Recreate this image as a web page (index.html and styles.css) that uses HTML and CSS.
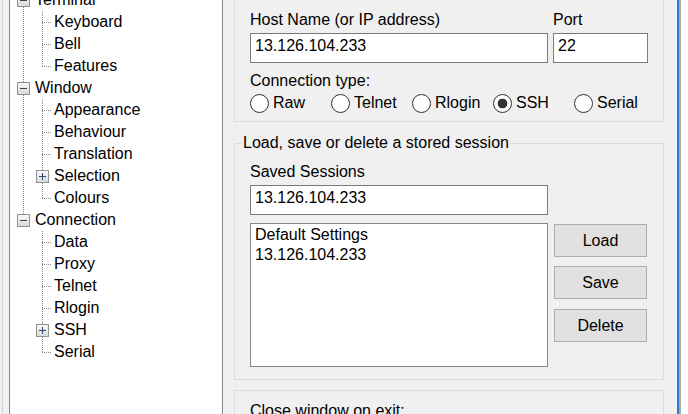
FILE: index.html
```html
<!DOCTYPE html>
<html>
<head>
<meta charset="utf-8">
<title>PuTTY Configuration</title>
<link rel="stylesheet" href="styles.css">
</head>
<body>
<div class="window">
  <div class="edge"></div>
  <div class="tree">
    <div class="rows">
      <div class="row"><span class="c v"><span class="box"></span></span><span class="lbl l0">Terminal</span></div>
      <div class="row"><span class="c v"></span><span class="c c1 t"></span><span class="lbl l1">Keyboard</span></div>
      <div class="row"><span class="c v"></span><span class="c c1 t"></span><span class="lbl l1">Bell</span></div>
      <div class="row"><span class="c v"></span><span class="c c1 e"></span><span class="lbl l1">Features</span></div>
      <div class="row"><span class="c v"><span class="box"></span></span><span class="lbl l0">Window</span></div>
      <div class="row"><span class="c v"></span><span class="c c1 t"></span><span class="lbl l1">Appearance</span></div>
      <div class="row"><span class="c v"></span><span class="c c1 t"></span><span class="lbl l1">Behaviour</span></div>
      <div class="row"><span class="c v"></span><span class="c c1 t"></span><span class="lbl l1">Translation</span></div>
      <div class="row"><span class="c v"></span><span class="c c1 v"><span class="box plus"></span></span><span class="lbl l1">Selection</span></div>
      <div class="row"><span class="c v"></span><span class="c c1 e"></span><span class="lbl l1">Colours</span></div>
      <div class="row"><span class="c up"><span class="box"></span></span><span class="lbl l0">Connection</span></div>
      <div class="row"><span class="c"></span><span class="c c1 t"></span><span class="lbl l1">Data</span></div>
      <div class="row"><span class="c"></span><span class="c c1 t"></span><span class="lbl l1">Proxy</span></div>
      <div class="row"><span class="c"></span><span class="c c1 t"></span><span class="lbl l1">Telnet</span></div>
      <div class="row"><span class="c"></span><span class="c c1 t"></span><span class="lbl l1">Rlogin</span></div>
      <div class="row"><span class="c"></span><span class="c c1 v"><span class="box plus"></span></span><span class="lbl l1">SSH</span></div>
      <div class="row"><span class="c"></span><span class="c c1 e"></span><span class="lbl l1">Serial</span></div>
    </div>
  </div>
  <div class="main">
    <div class="group g1">
      <div class="host-grid">
        <div class="lab">Host Name (or IP address)</div>
        <div class="lab">Port</div>
        <input class="field" type="text" value="13.126.104.233">
        <input class="field" type="text" value="22">
      </div>
      <div class="lab ctype">Connection type:</div>
      <div class="radios">
        <span class="opt"><span class="radio"></span>Raw</span>
        <span class="opt"><span class="radio"></span>Telnet</span>
        <span class="opt"><span class="radio"></span>Rlogin</span>
        <span class="opt"><span class="radio on"></span>SSH</span>
        <span class="opt"><span class="radio"></span>Serial</span>
      </div>
    </div>
    <fieldset class="group g2">
      <legend>Load, save or delete a stored session</legend>
      <div class="lab">Saved Sessions</div>
      <input class="field wide" type="text" value="13.126.104.233">
      <div class="sess">
        <div class="list">
          <div>Default Settings</div>
          <div>13.126.104.233</div>
        </div>
        <div class="btns">
          <button class="btn">Load</button>
          <button class="btn save">Save</button>
          <button class="btn del">Delete</button>
        </div>
      </div>
    </fieldset>
    <div class="group g3">
      <div class="lab">Close window on exit:</div>
    </div>
  </div>
  <div class="frame"></div>
  <div class="outside"></div>
</div>
</body>
</html>
```

FILE: styles.css
```css
html, body {
  margin: 0;
  padding: 0;
  background: #ffffff;
}

body {
  font-family: "Liberation Sans", Arial, sans-serif;
  font-size: 16px;
  color: #000;
}

.window {
  display: flex;
  height: 414px;
  overflow: hidden;
  background: #f0f0f0;
}

.edge {
  width: 9px;
  flex: none;
  background: linear-gradient(#d2d2d2, #d2d2d2) 2px 0 / 1px 100% no-repeat;
}

.tree {
  flex: none;
  width: 209px;
  box-sizing: content-box;
  background: #fff;
  border-left: 1px solid #828790;
  border-right: 1px solid #828790;
  padding-left: 3px;
}

.rows {
  margin-top: -11px;
}

.row {
  display: flex;
  height: 22px;
}

.c {
  width: 19px;
  height: 22px;
  flex: none;
  display: block;
}

.c1 {
  width: 20px;
}

.v {
  background: repeating-linear-gradient(to bottom, #8a8a8a 0 1px, transparent 1px 2px) 10px 0 / 1px 100% no-repeat;
}

.up {
  background: repeating-linear-gradient(to bottom, #8a8a8a 0 1px, transparent 1px 2px) 10px 0 / 1px 11px no-repeat;
}

.t {
  background:
    repeating-linear-gradient(to right, #8a8a8a 0 1px, transparent 1px 2px) 10px 11px / 10px 1px no-repeat,
    repeating-linear-gradient(to bottom, #8a8a8a 0 1px, transparent 1px 2px) 10px 0 / 1px 100% no-repeat;
}

.e {
  background:
    repeating-linear-gradient(to right, #8a8a8a 0 1px, transparent 1px 2px) 10px 11px / 10px 1px no-repeat,
    repeating-linear-gradient(to bottom, #8a8a8a 0 1px, transparent 1px 2px) 10px 0 / 1px 12px no-repeat;
}

.box {
  display: block;
  width: 13px;
  height: 13px;
  box-sizing: border-box;
  margin: 5px 0 0 4px;
  border: 1px solid #919191;
  background:
    linear-gradient(#34465c, #34465c) center / 7px 1px no-repeat,
    linear-gradient(#f8f8f8, #d9d9d9);
}

.box.plus {
  background:
    linear-gradient(#2c4a78, #2c4a78) center / 7px 1px no-repeat,
    linear-gradient(#2c4a78, #2c4a78) center / 1px 7px no-repeat,
    linear-gradient(#f8f8f8, #d9d9d9);
}

.lbl {
  line-height: 22px;
  white-space: nowrap;
}

.l0 {
  margin-left: 3px;
}

.l1 {
  margin-left: 2px;
}

.main {
  width: 454px;
  flex: none;
  box-sizing: border-box;
  padding: 0 13px 0 11px;
}

.group {
  border: 1px solid #dcdcdc;
  padding: 11px 15px 0;
}

.g1 {
  border-top: none;
  padding-bottom: 8px;
}

.lab {
  line-height: 18px;
  white-space: nowrap;
}

.host-grid {
  display: grid;
  grid-template-columns: 298px 95px;
  column-gap: 5px;
  row-gap: 4px;
}

.field {
  display: block;
  height: 30px;
  box-sizing: border-box;
  margin: 0;
  border: 1px solid #7a7a7a;
  background: #fff;
  padding: 0 4px 4px 4px;
  font: inherit;
  color: #000;
  outline: none;
  width: 100%;
}

.wide {
  width: 298px;
  margin-top: 4px;
}

.ctype {
  margin-top: 9px;
}

.radios {
  display: grid;
  grid-template-columns: repeat(4, 81px) auto;
  margin-top: 3px;
  height: 20px;
}

.opt {
  display: flex;
  align-items: center;
  gap: 4px;
  white-space: nowrap;
}

.radio {
  width: 19px;
  height: 19px;
  box-sizing: border-box;
  border: 1px solid #333;
  border-radius: 50%;
  background: #fff;
  flex: none;
}

.radio.on {
  background: radial-gradient(circle, #333 0 4.5px, #fff 5.2px);
}

.g2 {
  margin: 12px 0 0;
  padding: 11px 15px 12px;
  min-width: 0;
}

.g2 legend {
  padding: 0 1px;
  margin-left: -8px;
  line-height: 18px;
}

.sess {
  display: flex;
  margin-top: 8px;
}

.list {
  width: 298px;
  height: 144px;
  box-sizing: border-box;
  border: 1px solid #828790;
  background: #fff;
  padding: 1px 4px;
  line-height: 20px;
  flex: none;
}

.btns {
  display: flex;
  flex-direction: column;
  margin-left: 6px;
}

.btn {
  display: block;
  width: 93px;
  height: 33px;
  box-sizing: border-box;
  border: 1px solid #adadad;
  background: #e1e1e1;
  font: inherit;
  color: #000;
  padding: 0;
  margin-top: 1px;
}

.btn.save {
  margin-top: 9px;
}

.btn.del {
  margin-top: 10px;
}

.g3 {
  margin-top: 10px;
  height: 60px;
}

.frame {
  width: 2px;
  flex: none;
  background: #2f7bcb;
  border-right: 2px solid #a9a9a9;
}

.outside {
  flex: 1;
  background: #fff;
}
```
